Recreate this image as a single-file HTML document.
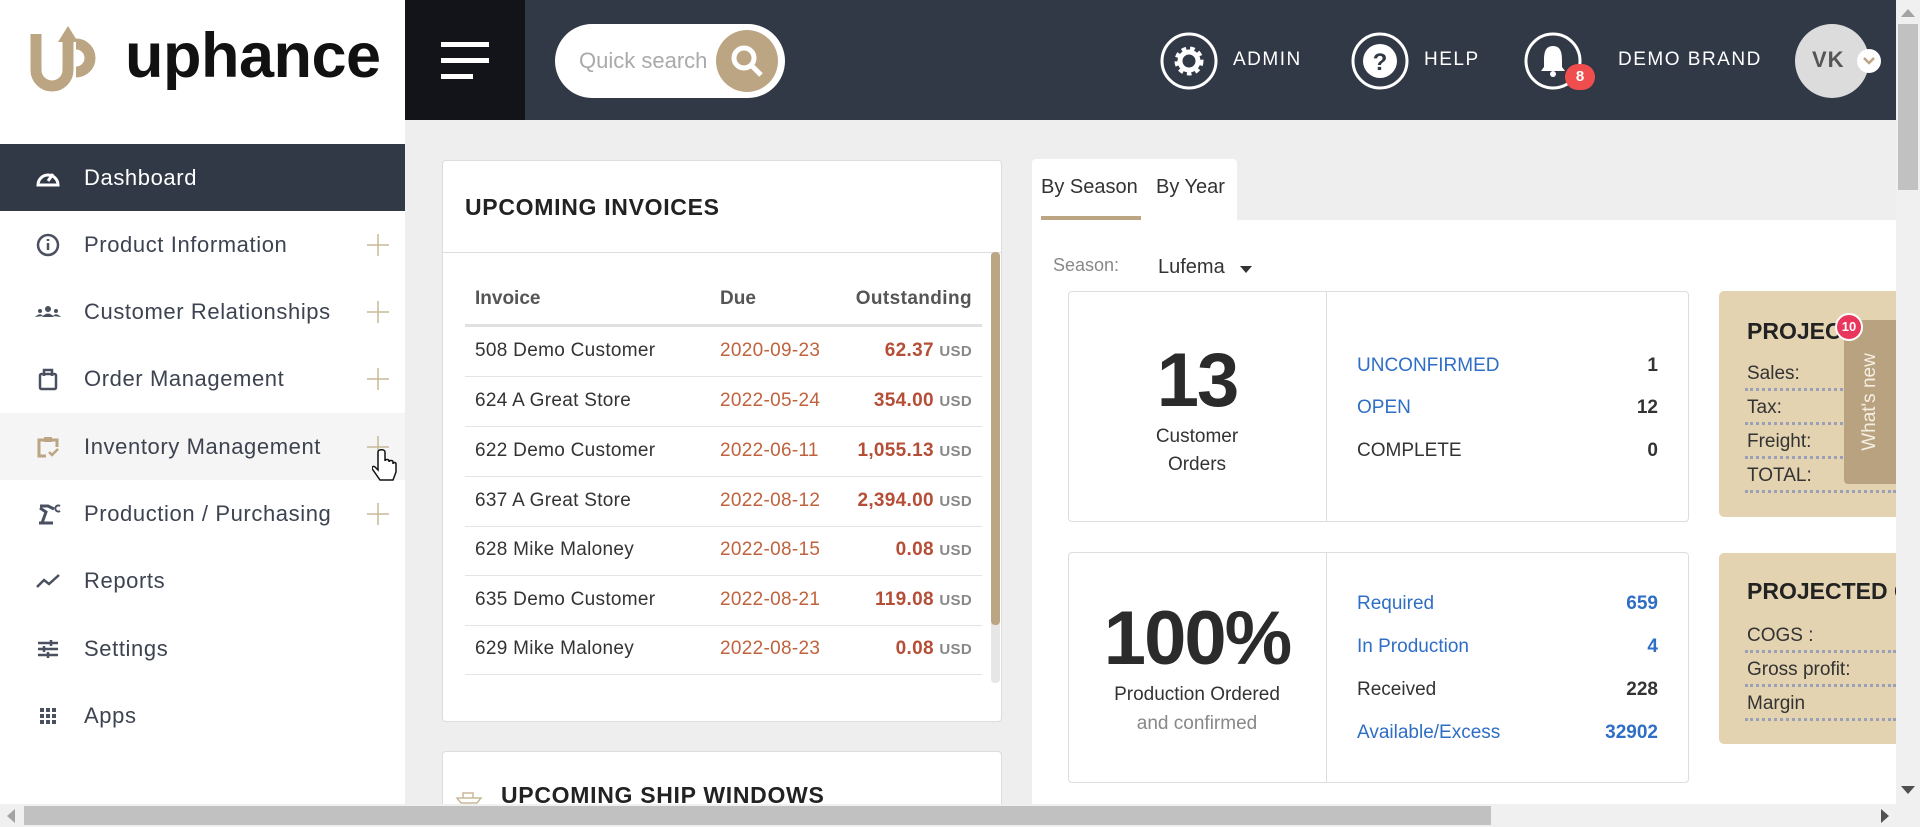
<!DOCTYPE html>
<html><head><meta charset="utf-8">
<style>
*{box-sizing:border-box;margin:0;padding:0}
html,body{width:1920px;height:827px;overflow:hidden}
body{background:#eeeeee;font-family:"Liberation Sans",Arial,sans-serif;position:relative;color:#333}
.a{position:absolute}
.hdr{left:405px;top:0;width:1491px;height:120px;background:#313846}
.side{left:0;top:0;width:405px;height:804px;background:#fff}
.nav{position:absolute;left:0;width:405px;height:67px;font-size:22px;color:#3d4350;display:flex;align-items:center;letter-spacing:0.6px}
.nav .ic{position:absolute;left:34px;top:22px;width:28px;height:24px}
.nav .t{position:absolute;left:84px}
.nav .p{position:absolute;left:366px;top:22px;width:24px;height:24px}
.card{background:#fff;border:1px solid #ddd;border-radius:4px}
.row{position:absolute;left:465px;width:517px;height:50px;border-bottom:1px solid #e4e4e4;font-size:19px;letter-spacing:0.3px}
.row span{position:absolute;top:13px}
.r1{left:10px;color:#333}
.r2{left:255px;color:#c0623d}
.r3{right:10px;font-weight:bold;color:#b54e36}
.r3 small{font-size:15px;color:#888;font-weight:bold}
.lst{position:absolute;font-size:19px}
.blue{color:#2f6ec5}
.tan{background:#e3d3b0;border-radius:5px}
.dot{position:absolute;left:1745px;width:151px;border-bottom:3px dotted #9aa0b8}
.tt{position:absolute;font-size:19px;color:#333}
</style></head><body>
<div class="a" style="left:0;top:0;width:1920px;height:2px;background:#e6e6e6"></div>
<div class="a side"></div>
<!-- logo -->
<svg class="a" style="left:30px;top:26px" width="70" height="68" viewBox="0 0 70 68">
<path d="M6 8 V44 A16 16 0 0 0 38 44 V14" fill="none" stroke="#bca583" stroke-width="11"/>
<path d="M38 0 L28 16 H48 Z" fill="#bca583"/>
<path d="M46 18 A14 14 0 0 1 46 46" fill="none" stroke="#bca583" stroke-width="11"/>
</svg>
<div class="a" style="left:125px;top:20px;font-size:63px;font-weight:bold;color:#111;letter-spacing:-0.5px">uphance</div>
<div class="a hdr"></div>
<div class="a" style="left:405px;top:0;width:120px;height:120px;background:#121419"></div>
<div class="a" style="left:441px;top:42px;width:48px;height:5px;background:#fff"></div>
<div class="a" style="left:441px;top:58px;width:48px;height:5px;background:#fff"></div>
<div class="a" style="left:441px;top:74px;width:32px;height:5px;background:#fff"></div>
<div class="a" style="left:555px;top:24px;width:230px;height:74px;background:#fff;border-radius:37px"></div>
<div class="a" style="left:579px;top:48px;font-size:22px;color:#aaa">Quick search</div>
<div class="a" style="left:716px;top:30px;width:62px;height:62px;border-radius:50%;background:#bca583"></div>
<svg class="a" style="left:728px;top:42px" width="40" height="40" viewBox="0 0 40 40"><circle cx="16" cy="16" r="10" fill="none" stroke="#fff" stroke-width="5"/><path d="M23 23 L33 33" stroke="#fff" stroke-width="5"/></svg>
<!-- header right -->
<svg class="a" style="left:1159px;top:31px" width="60" height="60" viewBox="0 0 60 60"><circle cx="30" cy="30" r="27" fill="none" stroke="#fff" stroke-width="3"/><circle cx="30" cy="30" r="11" fill="none" stroke="#fff" stroke-width="7" stroke-dasharray="4 3.5"/><circle cx="30" cy="30" r="9" fill="none" stroke="#fff" stroke-width="5"/></svg>
<div class="a" style="left:1233px;top:49px;font-size:19px;color:#fff;letter-spacing:1.5px">ADMIN</div>
<svg class="a" style="left:1350px;top:31px" width="60" height="60" viewBox="0 0 60 60"><circle cx="30" cy="30" r="27" fill="none" stroke="#fff" stroke-width="3"/><circle cx="30" cy="30" r="17" fill="#fff"/><text x="30" y="39" text-anchor="middle" font-size="24" font-weight="bold" fill="#313846" font-family="Liberation Sans">?</text></svg>
<div class="a" style="left:1424px;top:49px;font-size:19px;color:#fff;letter-spacing:1.5px">HELP</div>
<svg class="a" style="left:1523px;top:31px" width="60" height="60" viewBox="0 0 60 60"><circle cx="30" cy="30" r="27" fill="none" stroke="#fff" stroke-width="3"/><path d="M30 15 C22 15 21 22 21 30 V36 L18 40 H42 L39 36 V30 C39 22 38 15 30 15 Z" fill="#fff"/><circle cx="30" cy="43" r="3" fill="#fff"/></svg>
<div class="a" style="left:1565px;top:64px;width:30px;height:26px;border-radius:13px;background:#f04e4e;color:#fff;font-size:15px;font-weight:bold;text-align:center;line-height:26px">8</div>
<div class="a" style="left:1618px;top:49px;font-size:19px;color:#fff;letter-spacing:1.5px">DEMO BRAND</div>
<div class="a" style="left:1795px;top:24px;width:74px;height:74px;border-radius:50%;background:#dcdcdc"></div>
<div class="a" style="left:1812px;top:47px;font-size:22px;font-weight:bold;color:#555;letter-spacing:1px">VK</div>
<div class="a" style="left:1857px;top:49px;width:24px;height:24px;border-radius:50%;background:#fff"></div>
<svg class="a" style="left:1862px;top:55px" width="14" height="12"><path d="M2 3 L7 8 L12 3" fill="none" stroke="#bca583" stroke-width="2.5"/></svg>

<!-- sidebar nav -->
<div class="nav" style="top:144px;background:#313846;color:#fff"><svg class="ic" viewBox="0 0 28 24"><path d="M4 19 A10 10 0 1 1 24 19 Z" fill="none" stroke="#fff" stroke-width="3"/><path d="M14 15 L19 8" stroke="#fff" stroke-width="3"/></svg><span class="t">Dashboard</span></div>
<div class="nav" style="top:211px"><svg class="ic" viewBox="0 0 28 24"><circle cx="14" cy="12" r="10" fill="none" stroke="#4a5060" stroke-width="2.5"/><path d="M14 10 V17 M14 6 V8" stroke="#4a5060" stroke-width="2.5"/></svg><span class="t">Product Information</span><svg class="p" viewBox="0 0 24 24"><path d="M12 1V23M1 12H23" stroke="#c9b89a" stroke-width="1.5"/></svg></div>
<div class="nav" style="top:278px"><svg class="ic" viewBox="0 0 28 24"><circle cx="14" cy="9" r="3" fill="#4a5060"/><circle cx="6" cy="11" r="2" fill="#4a5060"/><circle cx="22" cy="11" r="2" fill="#4a5060"/><path d="M8 17 Q14 10 20 17 Z M1 17 Q6 12 9 16 Z M19 16 Q22 12 27 17Z" fill="#4a5060"/></svg><span class="t">Customer Relationships</span><svg class="p" viewBox="0 0 24 24"><path d="M12 1V23M1 12H23" stroke="#c9b89a" stroke-width="1.5"/></svg></div>
<div class="nav" style="top:345px"><svg class="ic" viewBox="0 0 28 24"><rect x="6" y="7" width="16" height="15" rx="1.5" fill="none" stroke="#4a5060" stroke-width="2.5"/><path d="M10 9 V3 H18 V9" fill="none" stroke="#4a5060" stroke-width="2.5"/></svg><span class="t">Order Management</span><svg class="p" viewBox="0 0 24 24"><path d="M12 1V23M1 12H23" stroke="#c9b89a" stroke-width="1.5"/></svg></div>
<div class="nav" style="top:413px;background:#f5f5f5"><svg class="ic" viewBox="0 0 28 24"><path d="M12 21 H5 V5 H23 V12" fill="none" stroke="#bca583" stroke-width="3"/><path d="M15 17 L18 20 L24 14" fill="none" stroke="#bca583" stroke-width="2.5"/><rect x="10" y="2" width="8" height="5" fill="#bca583"/></svg><span class="t">Inventory Management</span><svg class="p" viewBox="0 0 24 24"><path d="M12 1V23M1 12H23" stroke="#c9b89a" stroke-width="1.5"/></svg></div>
<div class="nav" style="top:480px"><svg class="ic" viewBox="0 0 28 24"><path d="M5 21 H19 M8 21 L12 10 L6 6 M6 4 H14 L20 7" fill="none" stroke="#4a5060" stroke-width="3"/><path d="M26 4 A3 3 0 1 0 26 9" fill="none" stroke="#4a5060" stroke-width="2"/></svg><span class="t">Production / Purchasing</span><svg class="p" viewBox="0 0 24 24"><path d="M12 1V23M1 12H23" stroke="#c9b89a" stroke-width="1.5"/></svg></div>
<div class="nav" style="top:547px"><svg class="ic" viewBox="0 0 28 24"><path d="M3 18 L10 11 L15 15 L25 6" fill="none" stroke="#4a5060" stroke-width="2.5"/></svg><span class="t">Reports</span></div>
<div class="nav" style="top:615px"><svg class="ic" viewBox="0 0 28 24"><path d="M4 6H24M4 12H24M4 18H24" stroke="#4a5060" stroke-width="2.5"/><path d="M17 3V9M10 9V15M14 15V21" stroke="#4a5060" stroke-width="2.5"/></svg><span class="t">Settings</span></div>
<div class="nav" style="top:682px"><svg class="ic" viewBox="0 0 28 24"><g fill="#4a5060"><rect x="6" y="4" width="4" height="4"/><rect x="12" y="4" width="4" height="4"/><rect x="18" y="4" width="4" height="4"/><rect x="6" y="10" width="4" height="4"/><rect x="12" y="10" width="4" height="4"/><rect x="18" y="10" width="4" height="4"/><rect x="6" y="16" width="4" height="4"/><rect x="12" y="16" width="4" height="4"/><rect x="18" y="16" width="4" height="4"/></g></svg><span class="t">Apps</span></div>
<!-- hand cursor -->
<svg class="a" style="left:372px;top:448px" width="26" height="38" viewBox="0 0 26 38"><path d="M6 4 V22 L3 19 C1 17 -1 20 1 22 L8 32 H21 L24 24 V16 C24 14 21 14 21 16 V14 C21 12 17 12 17 14 V13 C17 11 13 11 13 13 V4 C13 1 6 1 6 4 Z" fill="#fff" stroke="#111" stroke-width="1.5"/></svg>

<!-- invoices card -->
<div class="a card" style="left:442px;top:160px;width:560px;height:562px"></div>
<div class="a" style="left:465px;top:194px;font-size:23px;font-weight:bold;color:#222;letter-spacing:0.7px">UPCOMING INVOICES</div>
<div class="a" style="left:443px;top:252px;width:558px;height:1px;background:#ddd"></div>
<div class="a" style="left:475px;top:288px;font-size:19px;font-weight:bold;color:#555">Invoice</div>
<div class="a" style="left:720px;top:288px;font-size:19px;font-weight:bold;color:#555">Due</div>
<div class="a" style="left:830px;top:288px;width:142px;text-align:right;font-size:19px;font-weight:bold;color:#555;letter-spacing:0.4px">Outstanding</div>
<div class="a" style="left:465px;top:324px;width:517px;height:3px;background:#e0e0e0"></div>
<div class="row" style="top:327px"><span class="r1">508 Demo Customer</span><span class="r2">2020-09-23</span><span class="r3">62.37 <small>USD</small></span></div>
<div class="row" style="top:377px"><span class="r1">624 A Great Store</span><span class="r2">2022-05-24</span><span class="r3">354.00 <small>USD</small></span></div>
<div class="row" style="top:427px"><span class="r1">622 Demo Customer</span><span class="r2">2022-06-11</span><span class="r3">1,055.13 <small>USD</small></span></div>
<div class="row" style="top:477px"><span class="r1">637 A Great Store</span><span class="r2">2022-08-12</span><span class="r3">2,394.00 <small>USD</small></span></div>
<div class="row" style="top:526px"><span class="r1">628 Mike Maloney</span><span class="r2">2022-08-15</span><span class="r3">0.08 <small>USD</small></span></div>
<div class="row" style="top:576px"><span class="r1">635 Demo Customer</span><span class="r2">2022-08-21</span><span class="r3">119.08 <small>USD</small></span></div>
<div class="row" style="top:625px"><span class="r1">629 Mike Maloney</span><span class="r2">2022-08-23</span><span class="r3">0.08 <small>USD</small></span></div>
<div class="a" style="left:991px;top:252px;width:9px;height:431px;background:#e6e6e6;border-radius:4px"></div>
<div class="a" style="left:991px;top:252px;width:9px;height:373px;background:#bca583;border-radius:4px"></div>
<div class="a card" style="left:442px;top:751px;width:560px;height:60px;border-bottom:none;border-radius:4px 4px 0 0"></div>
<svg class="a" style="left:455px;top:788px" width="28" height="16"><path d="M2 10 H26 L22 15 H6 Z M8 10 V5 H18 V10" fill="none" stroke="#c9b89a" stroke-width="1.5"/></svg>
<div class="a" style="left:501px;top:782px;font-size:23px;font-weight:bold;color:#222;letter-spacing:0.7px">UPCOMING SHIP WINDOWS</div>

<!-- right panel -->
<div class="a" style="left:1032px;top:159px;width:205px;height:62px;background:#fff;border-radius:4px 4px 0 0"></div>
<div class="a" style="left:1041px;top:176px;font-size:20px;color:#333">By Season</div>
<div class="a" style="left:1156px;top:176px;font-size:20px;color:#333">By Year</div>
<div class="a" style="left:1041px;top:216px;width:100px;height:4px;background:#bca583"></div>
<div class="a" style="left:1032px;top:220px;width:864px;height:584px;background:#fff"></div>
<div class="a" style="left:1053px;top:255px;font-size:18px;color:#888">Season:</div>
<div class="a" style="left:1158px;top:256px;font-size:20px;color:#333">Lufema</div>
<svg class="a" style="left:1240px;top:266px" width="12" height="8"><path d="M0 0H12L6 7Z" fill="#333"/></svg>

<div class="a card" style="left:1068px;top:291px;width:621px;height:231px"></div>
<div class="a" style="left:1326px;top:292px;width:1px;height:229px;background:#ddd"></div>
<div class="a" style="left:1068px;top:337px;width:258px;text-align:center;font-size:76px;font-weight:bold;color:#2b2b2b;letter-spacing:-2px">13</div>
<div class="a" style="left:1068px;top:423px;width:258px;text-align:center;font-size:19px;color:#333;line-height:28px">Customer<br>Orders</div>
<div class="lst blue" style="left:1357px;top:355px">UNCONFIRMED</div><div class="lst" style="left:1600px;width:58px;text-align:right;top:355px;font-weight:bold">1</div>
<div class="lst blue" style="left:1357px;top:397px">OPEN</div><div class="lst" style="left:1600px;width:58px;text-align:right;top:397px;font-weight:bold">12</div>
<div class="lst" style="left:1357px;top:440px">COMPLETE</div><div class="lst" style="left:1600px;width:58px;text-align:right;top:440px;font-weight:bold">0</div>

<div class="a card" style="left:1068px;top:552px;width:621px;height:231px"></div>
<div class="a" style="left:1326px;top:553px;width:1px;height:229px;background:#ddd"></div>
<div class="a" style="left:1068px;top:595px;width:258px;text-align:center;font-size:76px;font-weight:bold;color:#2b2b2b;letter-spacing:-2px">100%</div>
<div class="a" style="left:1068px;top:684px;width:258px;text-align:center;font-size:19px;color:#333">Production Ordered</div>
<div class="a" style="left:1068px;top:713px;width:258px;text-align:center;font-size:19px;color:#888">and confirmed</div>
<div class="lst blue" style="left:1357px;top:593px">Required</div><div class="lst blue" style="left:1560px;width:98px;text-align:right;top:593px;font-weight:bold">659</div>
<div class="lst blue" style="left:1357px;top:636px">In Production</div><div class="lst blue" style="left:1560px;width:98px;text-align:right;top:636px;font-weight:bold">4</div>
<div class="lst" style="left:1357px;top:679px">Received</div><div class="lst" style="left:1560px;width:98px;text-align:right;top:679px;font-weight:bold">228</div>
<div class="lst blue" style="left:1357px;top:722px">Available/Excess</div><div class="lst blue" style="left:1560px;width:98px;text-align:right;top:722px;font-weight:bold">32902</div>

<div class="a tan" style="left:1719px;top:291px;width:190px;height:226px"></div>
<div class="a" style="left:1747px;top:318px;font-size:23px;font-weight:bold;color:#222">PROJEC</div>
<div class="tt" style="left:1747px;top:363px">Sales:</div><div class="dot" style="top:388px"></div>
<div class="tt" style="left:1747px;top:397px">Tax:</div><div class="dot" style="top:422px"></div>
<div class="tt" style="left:1747px;top:431px">Freight:</div><div class="dot" style="top:456px"></div>
<div class="tt" style="left:1747px;top:465px">TOTAL:</div><div class="dot" style="top:490px"></div>
<div class="a" style="left:1844px;top:320px;width:52px;height:164px;background:#b9a27f;border-radius:4px 0 0 4px"></div>
<div class="a" style="left:1870px;top:402px;transform:translate(-50%,-50%) rotate(-90deg);font-size:19px;color:#f5efe3;white-space:nowrap">What's new</div>
<div class="a" style="left:1835px;top:313px;width:28px;height:28px;border-radius:50%;background:#e8365c;border:2px solid #fff;color:#fff;font-size:13px;font-weight:bold;text-align:center;line-height:24px">10</div>

<div class="a tan" style="left:1719px;top:553px;width:190px;height:191px"></div>
<div class="a" style="left:1747px;top:578px;font-size:23px;font-weight:bold;color:#222;white-space:nowrap">PROJECTED G</div>
<div class="tt" style="left:1747px;top:625px">COGS :</div><div class="dot" style="top:650px"></div>
<div class="tt" style="left:1747px;top:659px">Gross profit:</div><div class="dot" style="top:684px"></div>
<div class="tt" style="left:1747px;top:693px">Margin</div><div class="dot" style="top:718px"></div>

<!-- scrollbars -->
<div class="a" style="left:1896px;top:0;width:24px;height:827px;background:#f0f0f0"></div>
<div class="a" style="left:1898px;top:24px;width:20px;height:166px;background:#c1c1c1"></div>
<svg class="a" style="left:1901px;top:8px" width="14" height="10"><path d="M0 9H14L7 1Z" fill="#a3a3a3"/></svg>
<svg class="a" style="left:1901px;top:785px" width="14" height="10"><path d="M0 1H14L7 9Z" fill="#505050"/></svg>
<div class="a" style="left:0;top:804px;width:1896px;height:23px;background:#f0f0f0"></div>
<div class="a" style="left:24px;top:806px;width:1467px;height:19px;background:#c1c1c1"></div>
<svg class="a" style="left:6px;top:809px" width="10" height="14"><path d="M9 0V14L1 7Z" fill="#a3a3a3"/></svg>
<svg class="a" style="left:1880px;top:809px" width="10" height="14"><path d="M1 0V14L9 7Z" fill="#505050"/></svg>
</body></html>
